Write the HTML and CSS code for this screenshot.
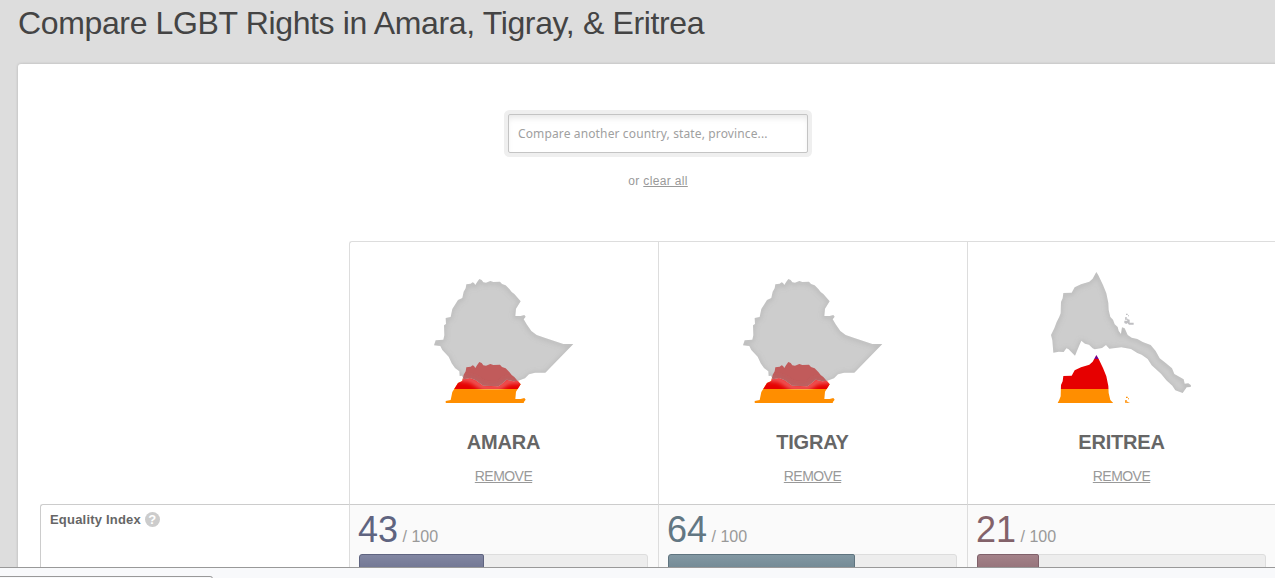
FILE: index.html
```
<!DOCTYPE html>
<html lang="en">
<head>
	<meta charset="UTF-8">
	<title>Compare LGBT Rights in Amara, Tigray, &amp; Eritrea</title>
	<link rel="stylesheet" href="styles.css">
</head>

<body>
<svg class="defs" width="0" height="0">
	<defs>
		<filter id="soft" x="-20%" y="-20%" width="140%" height="140%"><feGaussianBlur stdDeviation="8"/></filter>
		<path id="ethiopia" d="M139 58L152 56L158 52L162 54L166 60L171 52L178 42L185 45L190 52L198 53L211 48L220 51L240 50L246 57L257 61L268 72L275 81L283 87L302 109L288 131L286 153L302 153L313 150L317 155L311 163L320 178L334 198L350 210L376 219L430 237L460 237L376 323L345 323L327 328L315 340L295 347L280 349L260 344L244 358L235 364L190 362L166 345L150 339L131 343L126 332L119 333L118 319L105 309L95 295L86 275L67 255L61 243L42 241L47 226L70 224L73 211L72 181L78 177L77 159L92 156L97 132L114 105L127 99L131 80L137 70Z"/>
		<clipPath id="ethiopia-clip"><use href="#ethiopia"/></clipPath>
		<path id="eritrea" d="M184 36L190 46L204 75L214 100L220 129L221 150L226 171L234 179L239 193L248 201L251 213L258 222L261 202L269 205L278 225L290 233L307 237L323 246L347 255L362 273L374 295L393 310L411 325L418 342L446 358L449 371L460 370L468 376L467 381L455 382L443 399L421 391L412 377L394 361L378 341L350 316L338 297L320 284L307 279L288 267L259 262L223 266L213 255L201 264L179 268L173 265L162 254L150 251L139 242L133 256L120 287L100 267L94 265L86 276L71 275L55 278L52 241L48 225L58 205L65 186L73 170L77 160L78 126L83 115L85 99L110 98L119 82L138 73L163 65L173 56Z"/>
		<path id="islands" d="M273 161h5v4h-5zM279 166h3v3h-3zM271 171h4v5h4v3h-9zM268 182h8l3-4 5 1v9h12v6h-14l-5-5-3 3-6-3z"/>
		<clipPath id="eritrea-clip"><use href="#eritrea"/></clipPath>
		<g id="ethiopia-map">
			<use href="#ethiopia" y="249" fill="#ff8e00"/>
			<path clip-path="url(#ethiopia-flag)" fill="#e60000" d="M0 280H504V372H0z"/>
			<g clip-path="url(#ethiopia-flag)">
				<path fill="none" stroke="#fff" stroke-opacity=".45" stroke-width="14" filter="url(#soft)" d="M118 340L150 342L190 367L235 369L265 348L310 346"/>
			</g>
			<use href="#ethiopia" fill="#cdcdcd"/>
			<g clip-path="url(#ethiopia-clip)">
				<use href="#ethiopia" y="249" fill="#c15b5b"/>
				<use class="shade" href="#ethiopia" y="3" filter="url(#soft)"/>
			</g>
		</g>
		<clipPath id="ethiopia-flag"><use href="#ethiopia" y="249"/></clipPath>
		<clipPath id="eritrea-flag"><use href="#eritrea" y="249"/></clipPath>
	</defs>
</svg>

<div class="page">
	<h1>Compare LGBT Rights in Amara, Tigray, &amp; Eritrea</h1>
	<div class="panel">
		<form class="search">
			<input type="text" placeholder="Compare another country, state, province...">
			<p>or <a href="#">clear all</a></p>
		</form>

		<div class="compare">
			<div class="blank"></div>
			<div class="region first">
				<svg class="map" viewBox="0 0 504 414"><use href="#ethiopia-map"/></svg>
				<h2>Amara</h2>
				<a href="#">REMOVE</a>
			</div>
			<div class="region">
				<svg class="map" viewBox="0 0 504 414"><use href="#ethiopia-map"/></svg>
				<h2>Tigray</h2>
				<a href="#">REMOVE</a>
			</div>
			<div class="region">
				<svg class="map" viewBox="9 15 504 414">
					<g clip-path="url(#eritrea-flag)">
						<path fill="#770088" d="M0 280H504V297H0z"/>
						<path fill="#e60000" d="M0 297H504V387H0z"/>
						<path fill="#ff8e00" d="M0 387H504V450H0z"/>
					</g>
					<use href="#islands" y="249" fill="#ff8e00"/>
					<use href="#islands" fill="#bfbfc2"/>
					<use href="#eritrea" fill="#cdcdcd"/>
					<g clip-path="url(#eritrea-clip)">
						<use class="shade" href="#eritrea" y="3" filter="url(#soft)"/>
					</g>
				</svg>
				<h2>Eritrea</h2>
				<a href="#">REMOVE</a>
			</div>

			<div class="label">Equality Index <span class="help">?</span></div>
			<div class="score blue">
				<p><b>43</b> / 100</p>
				<div class="bar"><div class="fill" style="width:43.6%"></div></div>
			</div>
			<div class="score teal">
				<p><b>64</b> / 100</p>
				<div class="bar"><div class="fill" style="width:65.1%"></div></div>
			</div>
			<div class="score rose">
				<p><b>21</b> / 100</p>
				<div class="bar"><div class="fill" style="width:21.6%"></div></div>
			</div>
		</div>
	</div>
</div>
<div class="statusbar"><div class="status"></div></div>
</body>
</html>
```
FILE: styles.css
```
* { margin:0; padding:0; box-sizing:border-box;}
body { height:578px; display:flex; flex-direction:column; overflow:hidden; background:#ddd; font-family:"Liberation Sans", Arial, sans-serif; font-size:12px; color:#999;}
a { color:#999; text-decoration:underline;}
.defs { position:absolute;}

.page { flex:1; min-height:0; overflow:hidden; padding-left:18px;}
h1 { height:64px; padding-top:5px; font-size:32px; line-height:37px; font-weight:normal; letter-spacing:-.36px; color:#444;}
.panel { width:1280px; height:600px; padding:50px 0 0 22px; background:#fff; border-radius:3px 0 0 0; box-shadow:0 0 3px rgba(0,0,0,.2);}

.search { width:1236px; height:127px; text-align:center;}
.search input { display:block; width:300px; height:39px; margin:0 auto 0 468px; padding:0 9px; border:1px solid #c4c4c4; border-radius:2px; outline:none; box-shadow:0 0 0 4px #efefef, inset 0 5px 6px -2px #e8e8e8; font-family:"Noto Sans", sans-serif; font-size:12px; letter-spacing:.13px; color:#999;}
.search input::placeholder { color:#a0a0a0; opacity:1;}
.search p { padding-top:21px; line-height:14px; letter-spacing:.35px;}

.compare { display:grid; grid-template-columns:repeat(4, 309px); grid-template-rows:263px 120px;}
.region { border-top:1px solid #ddd; border-left:1px solid #ddd; text-align:center;}
.region.first { border-top-left-radius:3px;}
.region a { display:block; margin-right:1px; font-size:14px; line-height:16px; letter-spacing:-.55px;}
.map { display:block; width:168px; height:138px; margin:23px auto 0;}
.shade { fill:none; stroke:#888; stroke-opacity:.36; stroke-width:8px;}
h2 { padding:28px 1px 14px 0; font-size:20px; line-height:23px; letter-spacing:-.2px; color:#666; text-transform:uppercase;}

.label { padding:7px 9px; border:1px solid #ccc; border-width:1px 0 0 1px; border-top-left-radius:3px; font-size:13px; line-height:16px; font-weight:bold; letter-spacing:.2px; color:#666;}
.help { display:inline-block; width:15px; height:15px; border-radius:50%; background:#ccc; color:#fff; line-height:15px; text-align:center; letter-spacing:0;}
.score { padding:4px 10px 0 9px; border-top:1px solid #ccc; border-left:1px solid #ddd; background:#fafafa;}
.score p { height:45px; margin-left:-1px; font-size:16px; line-height:41px; white-space:nowrap;}
.score b { font-size:36px; font-weight:normal;}
.bar { height:30px; border:1px solid #ddd; border-radius:3px; background:#ededed;}
.fill { height:30px; margin:-1px 0 0 -1px; border:1px solid; border-radius:3px 2px 2px 3px;}
.blue b { color:#5f6480;}
.blue .fill { background:linear-gradient(#8186a2, #626784); border-color:#5f6480;}
.teal b { color:#627783;}
.teal .fill { background:linear-gradient(#8298a3, #647a86); border-color:#5f747f;}
.rose b { color:#83626a;}
.rose .fill { background:linear-gradient(#a48289, #86646b); border-color:#80616a;}

.statusbar { height:11px; border-top:1px solid #999; background:#f8f9fb; padding-top:8px;}
.status { width:213px; height:10px; border:1px solid #999; border-left:0; border-top-right-radius:3px; background:#f8f9fb;}
```
